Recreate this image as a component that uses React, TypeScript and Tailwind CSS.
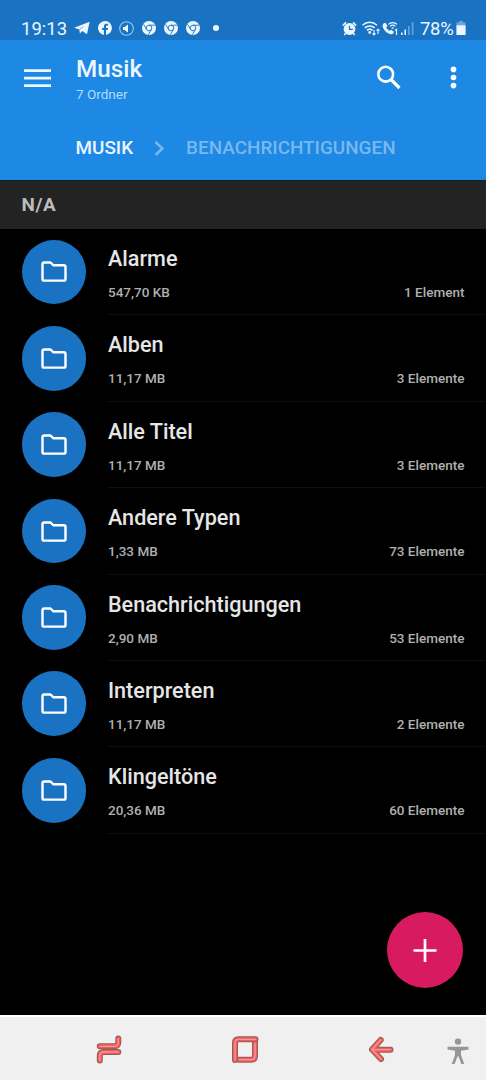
import React from 'react';

const folders = [
  { name: 'Alarme', size: '547,70 KB', count: '1 Element' },
  { name: 'Alben', size: '11,17 MB', count: '3 Elemente' },
  { name: 'Alle Titel', size: '11,17 MB', count: '3 Elemente' },
  { name: 'Andere Typen', size: '1,33 MB', count: '73 Elemente' },
  { name: 'Benachrichtigungen', size: '2,90 MB', count: '53 Elemente' },
  { name: 'Interpreten', size: '11,17 MB', count: '2 Elemente' },
  { name: 'Klingeltöne', size: '20,36 MB', count: '60 Elemente' }
];

function ChromeIcon() {
  return (
    <svg width="14" height="14" viewBox="0 0 14 14" fill="none">
      <circle cx="7" cy="7" r="7" fill="#eaf7ff" />
      <circle cx="7" cy="7" r="2.8" stroke="#1a73c2" strokeWidth="0.9" />
      <path d="M7 4.2h6M4.6 8.4 1.6 3.3M9.4 8.4l-3 5.2" stroke="#1a73c2" strokeWidth="0.9" />
    </svg>
  );
}

function StatusBar() {
  return (
    <div className="flex h-10 items-end bg-[#1a73c2] pl-[21px] pr-[20px] text-[#eaf7ff]">
      <div className="flex h-6 flex-1 items-center">
        <span className="w-[53px] pt-[2px] text-[18.5px] leading-6">19:13</span>
        <svg className="mr-2" width="16" height="14" viewBox="0 0 16 14" fill="currentColor">
          <path d="M15.6.8 13 13.2 8.2 10l-2.3 2.5-.6-4.1L.2 6.8z" />
          <path d="m5.5 8.4 4-2.900" stroke="#1a73c2" strokeWidth="0.6" />
        </svg>
        <svg className="mr-[7px]" width="14" height="14" viewBox="0 0 24 24" fill="currentColor">
          <path d="M24 12a12 12 0 1 0-13.9 11.9v-8.4h-3V12h3V9.4c0-3 1.8-4.7 4.5-4.7 1.3 0 2.700.2 2.700.2v3h-1.500c-1.500 0-2 .9-2 1.900V12h3.400l-.5 3.500h-2.900v8.400A12 12 0 0 0 24 12z" />
        </svg>
        <svg className="mr-2" width="15" height="15" viewBox="0 0 15 15" fill="none">
          <circle cx="7.5" cy="7.5" r="6.8" stroke="#8ecbf8" strokeWidth="1.1" />
          <path d="M4 6h1.600L9 3.500v8L5.600 9H4z" fill="#eaf7ff" />
        </svg>
        <div className="flex gap-2">
          <ChromeIcon />
          <ChromeIcon />
          <ChromeIcon />
        </div>
        <span className="ml-[13px] size-[6px] rounded-full bg-[#eaf7ff]" />
      </div>
      <div className="flex h-6 items-center">
        <svg className="mr-[5px]" width="15" height="15" viewBox="0 0 15 15" fill="none">
          <circle cx="7.5" cy="8" r="5.9" fill="#eaf7ff" />
          <path d="M.8 4.500 4 1.300M14.200 4.500 11 1.300M3.500 12.500 2.300 14M11.500 12.500l1.200 1.500" stroke="#eaf7ff" strokeWidth="1.7" />
          <path d="M7.500 4.700v3.600h3.300" stroke="#1a73c2" strokeWidth="1.2" />
        </svg>
        <svg className="mr-[2px]" width="18" height="15" viewBox="0 0 18 15" fill="none" stroke="#eaf7ff" strokeWidth="1.5">
          <path d="M.5 4.200a10.500 10.500 0 0 1 14.500 0M2.800 6.900a7.200 7.200 0 0 1 9.900 0M5 9.400a4 4 0 0 1 5.500 0" />
          <circle cx="7.7" cy="11.4" r="0.7" fill="#eaf7ff" />
          <path d="M12 9v5M10.500 12.400l1.500 1.500 1.500-1.500M16 13V8M14.500 9.700 16 8.200l1.500 1.500" strokeWidth="1.1" />
        </svg>
        <svg className="mr-[3px]" width="16" height="15" viewBox="0 0 16 15" fill="none">
          <path d="M1.900 2.300 3.500 1.800 5.500 5 4.200 6.300c.6 1.500 1.800 2.700 3.300 3.400l1.600-1 2.800 2-.5 1.600c-1.200 1.300-3.200 1-4.800.2C3.400 10.900 1 8 .6 5.200c-.1-1.400.3-2.300 1.300-2.900z" fill="#eaf7ff" />
          <path d="M6.300 3.400a6.600 6.600 0 0 1 8.800 0M8 5.400a4 4 0 0 1 5.400 0M9.600 7.300a1.900 1.900 0 0 1 2.200 0" stroke="#eaf7ff" strokeWidth="1.2" />
          <path d="m13 9.600 1.500-1.100V14" stroke="#eaf7ff" strokeWidth="1.2" />
        </svg>
        <svg className="mr-[6px]" width="13" height="13" viewBox="0 0 13 13" fill="#5ea4dd">
          <path d="M0 10.500h1.500V13H0zM3.500 7.500H5V13H3.500z" fill="#eaf7ff" />
          <path d="M7 4h1.700v9H7zM10.800 0h1.700v13h-1.700z" />
        </svg>
        <span className="w-[36px] pt-[2px] text-[18.5px] leading-6 tracking-[-0.3px]">78%</span>
        <svg width="10" height="14" viewBox="0 0 10 14">
          <path d="M3 0h4v1.500h2.500V14h-9V1.500H3z" fill="#68a9dc" />
          <path d="M.5 4.300h9V14h-9z" fill="#eaf7ff" />
        </svg>
      </div>
    </div>
  );
}

function Header() {
  return (
    <header className="h-[140px] bg-[#1e88e5] text-[#eaf7ff]">
      <div className="flex h-[76px] items-center pl-6 pr-[22px]">
        <svg className="mr-[25px]" width="27" height="19" viewBox="0 0 27 19" fill="currentColor">
          <path d="M0 .3h27V3H0zM0 7.800h27v2.700H0zM0 15.300h27V18H0z" />
        </svg>
        <div className="flex-1">
          <h1 className="text-[24.3px] font-medium leading-7">Musik</h1>
          <p className="mt-[3px] text-[13.5px] leading-4 text-[#b5dcfa]">7 Ordner</p>
        </div>
        <svg className="mr-[40px]" width="26" height="26" viewBox="0 0 26 26" fill="none" stroke="white">
          <circle cx="9.7" cy="9.2" r="7.4" strokeWidth="2.6" />
          <path d="m15 14.500 8.500 8.500" strokeWidth="3.2" />
        </svg>
        <svg width="22" height="24" viewBox="0 0 22 24" fill="white">
          <circle cx="11.5" cy="3.4" r="2.8" />
          <circle cx="11.5" cy="11.5" r="2.8" />
          <circle cx="11.5" cy="19.6" r="2.8" />
        </svg>
      </div>
      <nav className="flex h-16 items-center pl-[75.5px] pt-px text-[18.9px] font-medium">
        <span>MUSIK</span>
        <svg className="ml-[21px] mr-[21px]" width="11" height="16" viewBox="0 0 11 16" fill="none">
          <path d="m1.500 1 7 6.500-7 6.500" stroke="#78b8ef" strokeWidth="2.5" />
        </svg>
        <span className="text-[#78b8ef]">BENACHRICHTIGUNGEN</span>
      </nav>
    </header>
  );
}

function Tube({ d }: { d: string }) {
  return (
    <g fill="none" strokeLinecap="round" strokeLinejoin="round">
      <path d={d} stroke="#8a6250" strokeWidth="6" />
      <path d={d} stroke="#f4595f" strokeWidth="4.1" />
      <path d={d} stroke="#fb969c" strokeWidth="1.3" />
    </g>
  );
}

function NavBar() {
  return (
    <footer className="flex h-[65px] items-center border-t-2 border-white bg-[#f0f0f0] pl-24 pr-[17px]">
      <svg width="26" height="30" viewBox="0 0 26 30">
        <Tube d="M22.3 4.500v4q0 3.800-3.800 3.800H3.800" />
        <Tube d="M3.800 26.500V22q0-4 3.700-4h14.800" />
      </svg>
      <svg className="ml-[109px]" width="28" height="30" viewBox="0 0 28 30">
        <Tube d="M24 8v14q0 3.700-3.500 3.700H8" />
        <Tube d="M4 26V9q0-3.700 3.500-3.700h17" />
      </svg>
      <svg className="ml-[109px] mr-[51px]" width="28" height="30" viewBox="0 0 28 30">
        <Tube d="M12.700 6 4 15.500l9 9.500M5 15.700h17.500" />
      </svg>
      <svg className="mt-[5px]" width="22" height="27" viewBox="0 0 22 27" fill="#969696">
        <circle cx="11" cy="3.600" r="3.2" />
        <path d="M.5 8.800H21.500v2.800L14 12.700V17l3.300 9h-3L11.600 18.500h-1.200L7.700 26h-3L8 17V12.700L.5 11.600z" />
      </svg>
    </footer>
  );
}

export default function App() {
  return (
    <div className="relative flex h-[1080px] w-[486px] flex-col overflow-hidden bg-black font-[Roboto,sans-serif]">
      <StatusBar />
      <Header />

      <div className="flex h-[49px] items-center border-t border-[#181d22] bg-[#232323] px-[21.6px] text-[18.9px] font-bold tracking-[0.5px] text-[#bcbcbc]">
        N/A
      </div>

      <main className="flex-1">
        {folders.map((folder) => (
          <div key={folder.name} className="flex h-[86.4px] pl-[21.6px]">
            <div className="mt-[10.5px] flex size-[64.8px] items-center justify-center rounded-full bg-[#1a73c2]">
              <svg width="26" height="21" viewBox="0 0 26 21" fill="none" stroke="white" strokeWidth="2.4" strokeLinejoin="round">
                <path d="M3.200 1.500h6.300l2.700 2.700h10.600q1.700 0 1.700 1.700v12q0 1.700-1.700 1.700H3.200q-1.700 0-1.700-1.700V3.200q0-1.700 1.700-1.700z" />
              </svg>
            </div>
            <div className="ml-[21.6px] flex-1 border-b border-[#0e0e0e] pr-[21.6px]">
              <h2 className="mt-[16px] text-[21.6px] font-medium leading-7 text-[#e6e6e6]">{folder.name}</h2>
              <div className="mt-[11px] flex justify-between text-[13.5px] font-medium leading-4 text-[#b0b0b0]">
                <span>{folder.size}</span>
                <span>{folder.count}</span>
              </div>
            </div>
          </div>
        ))}
      </main>

      <button className="absolute bottom-[92px] right-[23px] flex size-[76px] items-center justify-center rounded-full bg-[#d81b60]">
        <svg width="24" height="24" viewBox="0 0 24 24" stroke="white" strokeWidth="2.7">
          <path d="M.5 12.500h23M12 1v23" />
        </svg>
      </button>

      <NavBar />
    </div>
  );
}
